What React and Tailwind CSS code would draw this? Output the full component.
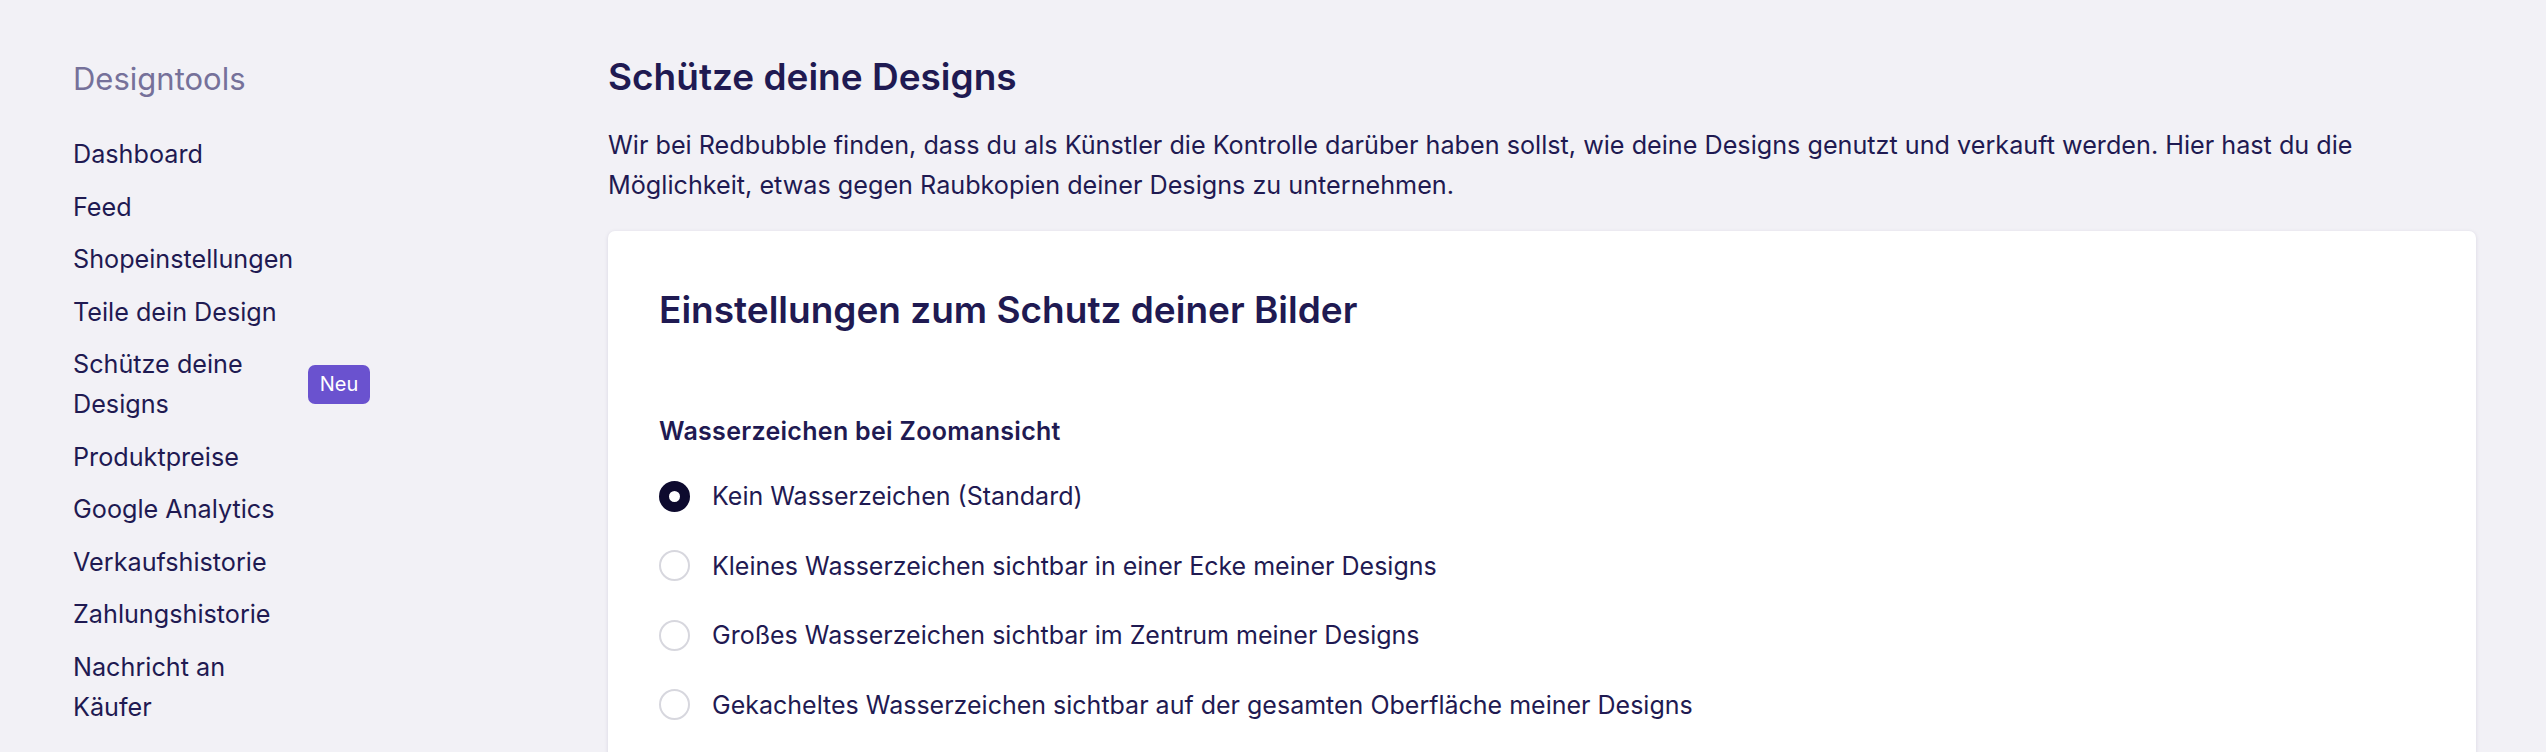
import React, { useState } from 'react';

const navItems = [
  { label: 'Dashboard' },
  { label: 'Feed' },
  { label: 'Shopeinstellungen' },
  { label: 'Teile dein Design' },
  { label: 'Schütze deine Designs', badge: 'Neu' },
  { label: 'Produktpreise' },
  { label: 'Google Analytics' },
  { label: 'Verkaufshistorie' },
  { label: 'Zahlungshistorie' },
  { label: 'Nachricht an Käufer' },
];

const options = [
  'Kein Wasserzeichen (Standard)',
  'Kleines Wasserzeichen sichtbar in einer Ecke meiner Designs',
  'Großes Wasserzeichen sichtbar im Zentrum meiner Designs',
  'Gekacheltes Wasserzeichen sichtbar auf der gesamten Oberfläche meiner Designs',
];

function Sidebar() {
  return (
    <aside className="w-[297px] shrink-0 pt-[59px]">
      <h2 className="text-[31px] leading-[40px] text-[#76719a]">Designtools</h2>
      <nav className="mt-[35px] flex flex-col gap-[12.5px]">
        {navItems.map(item => (
          <a key={item.label} className="flex items-center justify-between cursor-pointer">
            <span className="max-w-[230px] text-[25.2px] leading-[40px] text-[#1f1a52]">{item.label}</span>
            {item.badge && (
              <span className="h-[39px] w-[62px] shrink-0 rounded-[7px] bg-[#6a52cf] text-white text-[20px] flex items-center justify-center">
                {item.badge}
              </span>
            )}
          </a>
        ))}
      </nav>
    </aside>
  );
}

function Radio({ checked }) {
  if (checked) {
    return <span className="w-[31px] h-[31px] shrink-0 rounded-full border-[10px] border-[#0d0a2e] bg-white" />;
  }
  return <span className="w-[31px] h-[31px] shrink-0 rounded-full border-2 border-[#d7d7de] bg-white" />;
}

export default function App() {
  const [selected, setSelected] = useState(0);

  return (
    <div className="min-h-screen bg-[#f2f1f6] flex pl-[73px] pr-[70px] text-[#1f1a52]" style={{ fontFamily: 'Inter, "Noto Sans", sans-serif' }}>
      <Sidebar />
      <main className="flex-1 ml-[238px] pt-[55px]">
        <h1 className="text-[37px] leading-[44px] font-semibold">Schütze deine Designs</h1>
        <p className="mt-[26px] text-[25.2px] leading-[40px]">
          Wir bei Redbubble finden, dass du als Künstler die Kontrolle darüber haben sollst, wie deine Designs genutzt und verkauft werden. Hier hast du die Möglichkeit, etwas gegen Raubkopien deiner Designs zu unternehmen.
        </p>
        <section className="mt-[26px] bg-white rounded-[7px] shadow-[0_1px_4px_rgba(30,25,80,0.12)] px-[51px] pt-[57px] pb-[60px]">
          <h2 className="text-[37px] leading-[44px] font-semibold">Einstellungen zum Schutz deiner Bilder</h2>
          <h3 className="mt-[83px] text-[25px] leading-[32px] font-semibold tracking-[0.3px]">Wasserzeichen bei Zoomansicht</h3>
          <div className="mt-[29px] flex flex-col gap-[29.5px]">
            {options.map((opt, i) => (
              <label key={opt} className="flex items-center gap-[22px] cursor-pointer" onClick={() => setSelected(i)}>
                <Radio checked={selected === i} />
                <span className="text-[25px] leading-[40px]">{opt}</span>
              </label>
            ))}
          </div>
        </section>
      </main>
    </div>
  );
}
